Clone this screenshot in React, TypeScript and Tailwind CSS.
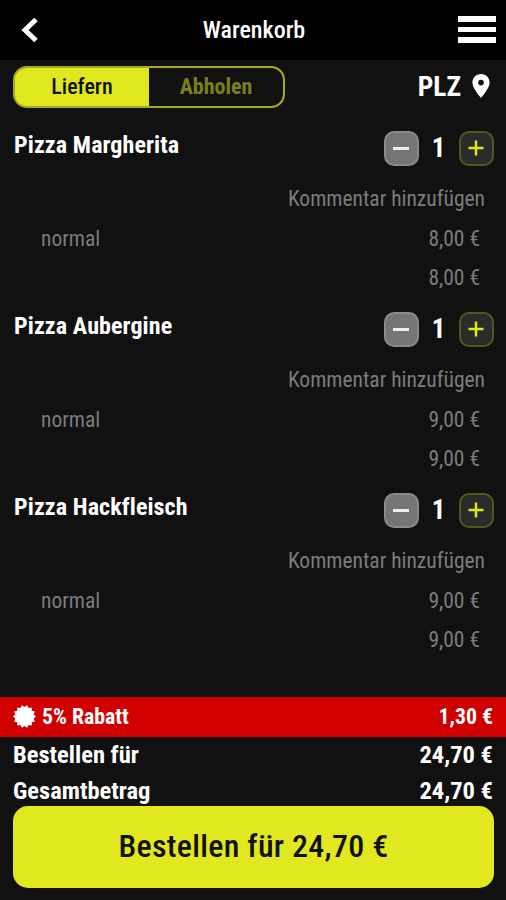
import { useState } from 'react'

type CartItem = {
    name: string;
    size: string;
    price: number;
    amount: number;
}

const formatPrice = (price: number) => price.toFixed(2).replace('.', ',') + ' €';

const DiscountIcon = () => {
    const points: string[] = [];
    for (let i = 0; i < 28; i++) {
        const radius = i % 2 === 0 ? 12 : 9.8;
        const angle = (i * Math.PI) / 14;
        points.push(`${12 + radius * Math.cos(angle)},${12 + radius * Math.sin(angle)}`);
    }
    return (
        <svg className="w-[23px] h-[23px] -mt-[2px]" viewBox="0 0 24 24" fill="white">
            <polygon points={points.join(' ')} />
        </svg>
    );
}

export default function App() {

    const [items, setItems] = useState<CartItem[]>([
        { name: 'Pizza Margherita', size: 'normal', price: 8, amount: 1 },
        { name: 'Pizza Aubergine', size: 'normal', price: 9, amount: 1 },
        { name: 'Pizza Hackfleisch', size: 'normal', price: 9, amount: 1 },
    ]);

    const changeAmount = (index: number, diff: number) => {
        setItems(items.map((item, i) => i === index ? { ...item, amount: Math.max(0, item.amount + diff) } : item));
    };

    const sum = items.reduce((acc, item) => acc + item.price * item.amount, 0);
    const discount = sum * 0.05;
    const total = sum - discount;

    return (
        <div className="w-full h-screen flex flex-col bg-[#111111] text-white font-['Roboto_Condensed','Roboto',sans-serif] font-stretch-75% overflow-hidden whitespace-nowrap">
            <header className="h-[60px] shrink-0 bg-black flex items-center justify-between pl-[21px] pr-[10px]">
                <svg className="w-[17px] h-[26px]" viewBox="0 0 17 26" fill="none" stroke="white" strokeWidth="5">
                    <path d="M15 2.5L4 13L15 23.5" />
                </svg>
                <h1 className="text-center text-[24px] font-medium pl-[12px]">Warenkorb</h1>
                <div className="flex flex-col items-end gap-[5px] pb-px">
                    <div className="w-[38px] h-[5.5px] bg-white"></div>
                    <div className="w-[38px] h-[5.5px] bg-white"></div>
                    <div className="w-[38px] h-[5.5px] bg-white"></div>
                </div>
            </header>

            <div className="h-[68px] shrink-0 flex justify-between pl-[13px] pr-[16px] pt-[6px]">
                <div className="w-[272px] h-[42px] flex rounded-[14px] border-2 border-[#a5aa22] bg-[#dfe81f] overflow-hidden text-[22px] leading-[36px]">
                    <button className="w-[134px] text-[#111111] font-medium">Liefern</button>
                    <button className="flex-1 bg-[#111111] text-[#7b8019] font-bold">Abholen</button>
                </div>
                <div className="h-[42px] flex items-center gap-[11px] text-[27.5px] font-bold">
                    PLZ
                    <svg className="w-[18px] h-[24px] -mt-[2px]" viewBox="0 0 18 24" fill="white">
                        <path fillRule="evenodd" d="M9 0C4 0 .4 3.9.4 8.6C.4 14.8 9 24 9 24S17.6 14.8 17.6 8.6C17.6 3.9 14 0 9 0ZM9 5.8A2.8 2.8 0 1 1 9 11.4A2.8 2.8 0 1 1 9 5.8Z" />
                    </svg>
                </div>
            </div>

            <main className="flex-1">
                {items.map((item, index) => (
                    <div key={item.name} className="h-[181px] pl-[14px] pr-[12px]">
                        <div className="h-10 flex items-center justify-between">
                            <h2 className="text-[24px] tracking-[0.1px] font-bold pb-[7px]">{item.name}</h2>
                            <div className="flex items-center">
                                <button
                                    className="w-[35px] h-[35px] rounded-[10px] border-2 border-[#8b8b8b] bg-[#757575] flex items-center justify-center"
                                    onClick={() => changeAmount(index, -1)}
                                >
                                    <span className="w-[16px] h-[3px] -ml-px bg-[#eeeeee]"></span>
                                </button>
                                <span className="w-[40px] pr-px text-center text-[27px] font-bold">{item.amount}</span>
                                <button
                                    className="w-[35px] h-[35px] rounded-[10px] border-2 border-[#54571b] bg-[#2b2b2b] flex items-center justify-center"
                                    onClick={() => changeAmount(index, 1)}
                                >
                                    <svg className="w-4 h-4 -ml-px" viewBox="0 0 16 16" stroke="#dfe81f" strokeWidth="2.5">
                                        <path d="M8 0.5V15.5M0.5 8H15.5" />
                                    </svg>
                                </button>
                            </div>
                        </div>
                        <div className="mt-[10px] pr-[9px] text-[21.5px] text-[#7c7c7c]">
                            <p className="h-[41px] leading-[41px] text-right">Kommentar hinzufügen</p>
                            <div className="h-[39px] leading-[39px] flex justify-between pl-[27px] pr-[5px]">
                                <span>{item.size}</span>
                                <span>{formatPrice(item.price)}</span>
                            </div>
                            <p className="h-[39px] leading-[39px] text-right pr-[5px]">{formatPrice(item.price * item.amount)}</p>
                        </div>
                    </div>
                ))}
            </main>

            <footer className="h-[203px] shrink-0 font-bold text-[24.5px]">
                <div className="h-10 leading-[40px] bg-[#d10000] flex justify-between px-[13px] text-[21.8px]">
                    <div className="flex items-center gap-[6px]">
                        <DiscountIcon />
                        <span className="h-full">5% Rabatt</span>
                    </div>
                    <span>{formatPrice(discount)}</span>
                </div>
                <div className="h-9 leading-[35px] flex justify-between px-[13px]">
                    <span>Bestellen für</span>
                    <span>{formatPrice(total)}</span>
                </div>
                <div className="h-[33px] leading-[36px] flex justify-between px-[13px]">
                    <span>Gesamtbetrag</span>
                    <span>{formatPrice(total)}</span>
                </div>
                <div className="pl-[13px] pr-[12px]">
                    <button className="w-full h-[82px] pb-[2px] rounded-[15px] bg-[#e1e81f] text-[#111111] text-[32px] font-medium tracking-[0.3px]">
                        Bestellen für {formatPrice(total)}
                    </button>
                </div>
            </footer>
        </div>
    )
}
